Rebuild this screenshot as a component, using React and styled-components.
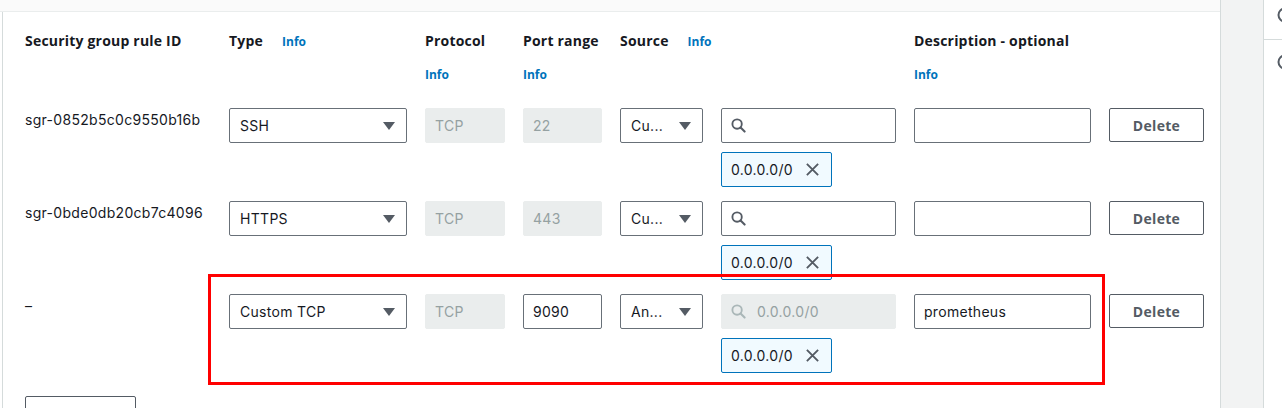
import React from "react";
import styled, { createGlobalStyle } from "styled-components";

const GlobalStyle = createGlobalStyle`
  html, body {
    margin: 0;
    padding: 0;
    height: 408px;
    overflow: hidden;
    background: #fff;
  }
  body {
    font-family: Inter, "Open Sans", sans-serif;
    color: #16191f;
  }
  * { box-sizing: border-box; }
`;

const COLUMNS = "186px 178px 80px 79px 83px 175px 177px 95px";

const rules = [
  { id: "sgr-0852b5c0c9550b16b", type: "SSH", port: "22", source: "Cu...", desc: "", custom: true },
  { id: "sgr-0bde0db20cb7c4096", type: "HTTPS", port: "443", source: "Cu...", desc: "", custom: true },
  { id: "–", type: "Custom TCP", port: "9090", source: "An...", desc: "prometheus", custom: false, marked: true },
];

function Caret() {
  return (
    <svg width="12" height="8" viewBox="0 0 12 8">
      <path d="M0 0 H12 L6 8 Z" fill="#545b64" />
    </svg>
  );
}

function SearchIcon({ muted }) {
  const c = muted ? "#aab7b8" : "#545b64";
  return (
    <svg width="15" height="15" viewBox="0 0 16 16" fill="none">
      <circle cx="6.5" cy="6.5" r="5" stroke={c} strokeWidth="2" />
      <path d="M10.2 10.2 L14.5 14.5" stroke={c} strokeWidth="2.2" strokeLinecap="round" />
    </svg>
  );
}

function CloseIcon() {
  return (
    <svg width="15" height="15" viewBox="0 0 16 16" fill="none">
      <path d="M2 2 L14 14 M14 2 L2 14" stroke="#545b64" strokeWidth="2" />
    </svg>
  );
}

function RailIcon() {
  return (
    <svg width="18" height="16" viewBox="0 0 18 16" fill="none">
      <circle cx="9" cy="8" r="6.5" stroke="#545b64" strokeWidth="2" />
    </svg>
  );
}

function Label({ children, info, stacked }) {
  return (
    <HeaderCell $stacked={stacked}>
      <LabelText>{children}</LabelText>
      {info && <InfoLink $stacked={stacked}>Info</InfoLink>}
    </HeaderCell>
  );
}

export default function App() {
  return (
    <Page>
      <GlobalStyle />
      <Main>
        <TopStrip />
        <Body>
          <Grid>
            <Label>Security group rule ID</Label>
            <Label info>Type</Label>
            <Label info stacked>Protocol</Label>
            <Label info stacked>Port range</Label>
            <SourceHeader>
              <Label info>Source</Label>
            </SourceHeader>
            <Label info stacked>Description - optional</Label>
            <div />
          </Grid>

          <Rows>
            {rules.map((r) => (
              <Row key={r.id}>
                {r.marked && <Annotation />}
                <IdText>{r.id}</IdText>
                <Select>
                  <span>{r.type}</span>
                  <Caret />
                </Select>
                <Field $disabled>TCP</Field>
                <Field $disabled={r.custom}>{r.port}</Field>
                <Select>
                  <span>{r.source}</span>
                  <Caret />
                </Select>
                <Stack>
                  <SearchField $disabled={!r.custom}>
                    <SearchIcon muted={!r.custom} />
                    {!r.custom && <Placeholder>0.0.0.0/0</Placeholder>}
                  </SearchField>
                  <Token>
                    <span>0.0.0.0/0</span>
                    <CloseIcon />
                  </Token>
                </Stack>
                <Field>{r.desc}</Field>
                <Button>Delete</Button>
              </Row>
            ))}
          </Rows>

          <AddButton />
        </Body>
      </Main>
      <Gutter />
      <Rail>
        <RailSection>
          <RailIcon />
        </RailSection>
        <RailSection $plain>
          <RailIcon />
        </RailSection>
      </Rail>
    </Page>
  );
}

// ================= STYLED COMPONENTS =================

const Page = styled.div`
  display: flex;
  width: 1282px;
  height: 408px;
  overflow: hidden;
`;

const Main = styled.div`
  width: 1221px;
  flex: none;
  display: flex;
  flex-direction: column;
  border-right: 1px solid #d5dbdb;
`;

const TopStrip = styled.div`
  flex: none;
  height: 12px;
  background: #fafafa;
  border-bottom: 1px solid #eaeded;
`;

const Body = styled.div`
  flex: none;
  margin-left: 2px;
  border-left: 1px solid #d5dbdb;
  padding: 19px 0 0 22px;
`;

const Grid = styled.div`
  display: grid;
  grid-template-columns: ${COLUMNS};
  column-gap: 18px;
`;

const HeaderCell = styled.div`
  display: flex;
  flex-direction: ${(p) => (p.$stacked ? "column" : "row")};
  align-items: ${(p) => (p.$stacked ? "flex-start" : "baseline")};
  white-space: nowrap;
  font-family: "Open Sans", sans-serif;
`;

const SourceHeader = styled.div`
  grid-column: span 2;
`;

const LabelText = styled.span`
  font-size: 14px;
  line-height: 20px;
  font-weight: 700;
  letter-spacing: 0.2px;
  color: #16191f;
`;

const InfoLink = styled.span`
  font-size: 12px;
  line-height: 20px;
  font-weight: 700;
  color: #0073bb;
  margin-left: ${(p) => (p.$stacked ? "0" : "19px")};
  margin-top: ${(p) => (p.$stacked ? "14px" : "0")};
`;

const Rows = styled.div`
  display: flex;
  flex-direction: column;
  gap: 14px;
  margin-top: 23px;
`;

const Row = styled.div`
  position: relative;
  display: grid;
  grid-template-columns: ${COLUMNS};
  column-gap: 18px;
  align-items: start;
`;

const Annotation = styled.div`
  position: absolute;
  top: -20px;
  left: 183px;
  width: 897px;
  bottom: -12px;
  border: 3px solid #ff0000;
  pointer-events: none;
`;

const IdText = styled.div`
  padding-top: 2px;
  font-size: 14px;
  line-height: 20px;
  letter-spacing: 0.3px;
  color: #16191f;
  white-space: nowrap;
`;

const Field = styled.div`
  height: 35px;
  display: flex;
  align-items: center;
  padding: 0 9px;
  font-size: 14px;
  letter-spacing: 0.3px;
  border-radius: 2px;
  border: 1px solid ${(p) => (p.$disabled ? "#eaeded" : "#687078")};
  background: ${(p) => (p.$disabled ? "#eaeded" : "#fff")};
  color: ${(p) => (p.$disabled ? "#95a1a2" : "#16191f")};
`;

const Select = styled(Field)`
  justify-content: space-between;
  padding: 0 11px 0 10px;
  white-space: nowrap;
`;

const Stack = styled.div`
  display: flex;
  flex-direction: column;
  align-items: flex-start;
  gap: 9px;
`;

const SearchField = styled(Field)`
  width: 100%;
  gap: 11px;
`;

const Placeholder = styled.span`
  color: #95a1a2;
`;

const Token = styled.div`
  height: 35px;
  width: 111px;
  display: flex;
  align-items: center;
  justify-content: space-between;
  padding: 0 11px 0 9px;
  border: 1px solid #0073bb;
  border-radius: 2px;
  background: #f1faff;
  font-size: 14px;
  letter-spacing: 0.3px;
  color: #16191f;
`;

const Button = styled.div`
  height: 34px;
  display: flex;
  align-items: center;
  justify-content: center;
  border: 1px solid #545b64;
  border-radius: 2px;
  font-family: "Open Sans", sans-serif;
  font-size: 14px;
  font-weight: 700;
  letter-spacing: 0.3px;
  color: #545b64;
  background: #fff;
`;

const AddButton = styled.div`
  margin-top: 23px;
  width: 111px;
  height: 34px;
  border: 1px solid #545b64;
  border-radius: 2px;
`;

const Gutter = styled.div`
  width: 43px;
  flex: none;
  background: #f2f3f3;
  border-right: 1px solid #d5dbdb;
`;

const Rail = styled.div`
  flex: 1;
  display: flex;
  flex-direction: column;
`;

const RailSection = styled.div`
  height: ${(p) => (p.$plain ? "auto" : "40px")};
  padding: ${(p) => (p.$plain ? "14px 0 0 12px" : "7px 0 0 12px")};
  border-bottom: ${(p) => (p.$plain ? "none" : "1px solid #d5dbdb")};
`;
